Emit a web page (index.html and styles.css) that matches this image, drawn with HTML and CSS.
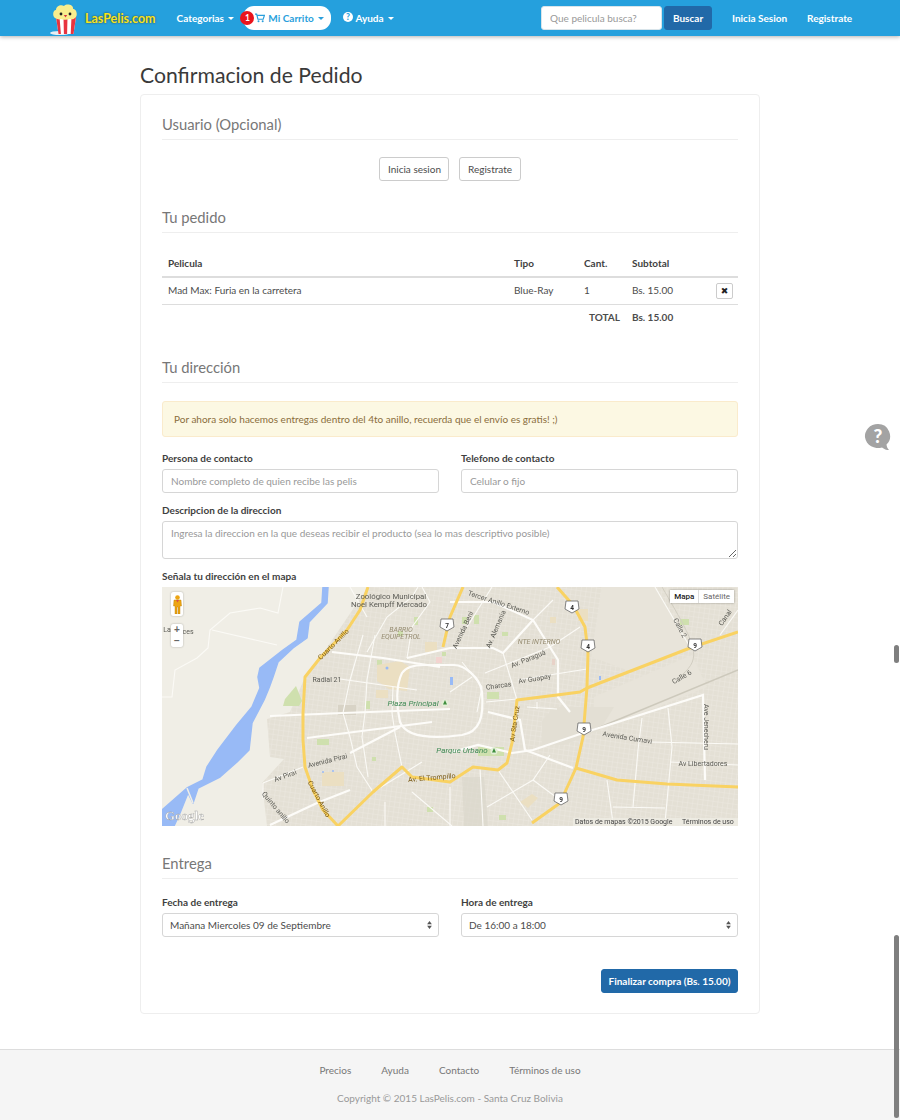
FILE: index.html
```html
<!DOCTYPE html>
<html lang="es">
<head>
    <meta charset="UTF-8">
    <meta name="viewport" content="width=device-width, initial-scale=1.0">
    <title>Confirmacion de Pedido - LasPelis.com</title>
    <link rel="stylesheet" href="styles.css">
</head>
<body>

<nav class="navbar">
    <a class="brand">
        <svg class="brand-logo" width="30" height="31" viewBox="0 0 30 31">
            <ellipse cx="10" cy="29" rx="10" ry="2" fill="#e8eef2"/>
            <path d="M6 13h20l-2.500 17h-15z" fill="#fff"/>
            <path d="M6 13h3.500l1.400 17H8.500zM13.500 13h4l-.4 17h-3.200zM21.500 13H26l-2.500 17h-2.800z" fill="#e8343f"/>
            <path d="M5 14c-3-2-2-8 1-8 0-4 5-6 8-4 3-3 10-1 9 3 4 0 5 7 2 9-2 2-4 1-5 1-3 1-7 1-9 0-2 1-4 0-6-1z" fill="#f9ee8e"/>
            <circle cx="11" cy="10" r="1.400" fill="#222"/>
            <circle cx="20" cy="10" r="1.400" fill="#222"/>
            <path d="M13.800 11h3.400l-1.700 2.600z" fill="#d9343f"/>
        </svg>
        <span class="brand-name">LasPelis.com</span>
    </a>
    <a class="nav-link nav-categorias">Categorias <i class="caret"></i></a>
    <div class="cart-pill">
        <span class="cart-badge">1</span>
        <svg class="cart-icon" width="10" height="10" viewBox="0 0 12 11">
            <path d="M0 .8h2l1.500 6.200h6.300L11.300 2.300H2.700" fill="none" stroke="#2a9fdc" stroke-width="1.400"/>
            <circle cx="4.200" cy="9.500" r="1.200" fill="#2a9fdc"/>
            <circle cx="9.200" cy="9.500" r="1.200" fill="#2a9fdc"/>
        </svg>
        Mi Carrito <i class="caret"></i>
    </div>
    <a class="nav-link nav-ayuda">
        <svg width="10" height="10" viewBox="0 0 10 10">
            <circle cx="5" cy="5" r="5" fill="#fff"/>
            <text x="5" y="8" class="q-mark">?</text>
        </svg>
        Ayuda <i class="caret"></i>
    </a>
    <form class="nav-search">
        <input type="text" placeholder="Que pelicula busca?">
        <button type="button" class="btn-buscar">Buscar</button>
    </form>
    <a class="nav-link nav-login">Inicia Sesion</a>
    <a class="nav-link nav-register">Registrate</a>
</nav>

<main class="container">
    <h1>Confirmacion de Pedido</h1>

    <div class="panel">
        <h2 class="first">Usuario (Opcional)</h2>
        <div class="user-buttons">
            <button type="button" class="btn">Inicia sesion</button>
            <button type="button" class="btn">Registrate</button>
        </div>

        <h2>Tu pedido</h2>
        <table class="order">
            <thead>
                <tr>
                    <th class="col-name">Pelicula</th>
                    <th class="col-type">Tipo</th>
                    <th class="col-qty">Cant.</th>
                    <th class="col-sub">Subtotal</th>
                    <th class="col-del"></th>
                </tr>
            </thead>
            <tbody>
                <tr>
                    <td>Mad Max: Furia en la carretera</td>
                    <td>Blue-Ray</td>
                    <td>1</td>
                    <td>Bs. 15.00</td>
                    <td class="cell-del"><button type="button" class="btn-del">&#10006;</button></td>
                </tr>
                <tr class="total-row">
                    <td colspan="3">TOTAL</td>
                    <td>Bs. 15.00</td>
                    <td></td>
                </tr>
            </tbody>
        </table>

        <h2 class="address-title">Tu dirección</h2>
        <div class="alert">Por ahora solo hacemos entregas dentro del 4to anillo, recuerda que el envío es gratis! ;)</div>

        <div class="form-row">
            <label>
                <span>Persona de contacto</span>
                <input type="text" placeholder="Nombre completo de quien recibe las pelis">
            </label>
            <label>
                <span>Telefono de contacto</span>
                <input type="text" placeholder="Celular o fijo">
            </label>
        </div>
        <label class="form-block">
            <span>Descripcion de la direccion</span>
            <textarea placeholder="Ingresa la direccion en la que deseas recibir el producto (sea lo mas descriptivo posible)"></textarea>
        </label>
        <div class="map-label">Señala tu dirección en el mapa</div>

        <div class="map">
            <svg width="576" height="239" viewBox="0 0 576 239">
                <defs>
                    <pattern id="streets" width="5" height="5" patternUnits="userSpaceOnUse" patternTransform="rotate(8)">
                        <path d="M0 0H5M0 0V5" stroke="#efece5" stroke-width="1" fill="none"/>
                    </pattern>
                </defs>
                <rect width="576" height="239" fill="#f0eee6"/>
                <path d="M206 0L158 71 143 90 128 125 105 132 108 170 122 172 100 196 105 239H576V0z" fill="#e4e0d5"/>
                <path d="M206 0L158 71 143 90 128 125 105 132 108 170 122 172 100 196 105 239H576V0z" fill="url(#streets)" opacity=".7"/>
                <path d="M440 0L493 0 528 60 470 85 430 70z" fill="#e8e4da"/>
                <path d="M432 110L530 68 545 100 431 146z" fill="#e8e4da"/>

                <!-- parks and blocks -->
                <g fill="#cfe0ae">
                    <path d="M123 112l11-13 6 15-3 5h-16z"/>
                    <rect x="155" y="152" width="12" height="6"/>
                    <rect x="204" y="114" width="4" height="8"/>
                    <rect x="215" y="73" width="5" height="5"/>
                    <rect x="252" y="30" width="4" height="8"/>
                    <rect x="312" y="28" width="5" height="9"/>
                    <rect x="325" y="105" width="12" height="7"/>
                    <rect x="316" y="160" width="26" height="9"/>
                    <rect x="337" y="228" width="7" height="5"/>
                    <rect x="518" y="32" width="9" height="6"/>
                    <rect x="236" y="44" width="5" height="5"/>
                    <rect x="280" y="65" width="4" height="4"/>
                    <rect x="210" y="170" width="4" height="4"/>
                    <rect x="265" y="220" width="6" height="5"/>
                    <rect x="300" y="30" width="5" height="7"/>
                    <rect x="340" y="45" width="6" height="4"/>
                </g>
                <g fill="#ebdfc2">
                    <path d="M215 78l23-4 10 6-3 24-18-2-12-8z"/>
                    <rect x="160" y="185" width="22" height="14"/>
                    <rect x="263" y="55" width="12" height="10"/>
                    <rect x="214" y="103" width="12" height="8"/>
                    <path d="M358 215l12-8 6 4-10 10z"/>
                    <rect x="416" y="22" width="10" height="12"/>
                    <rect x="388" y="30" width="6" height="6"/>
                </g>
                <rect x="176" y="118" width="18" height="10" fill="#d8d3c6"/>
                <path d="M452 120h-60l-12 14v24h22l36-15z" fill="#e3dfd4"/>
                <path d="M300 190l22 0 4 49h-24z" fill="#d9d5ca" opacity=".6"/>
                <rect x="274" y="70" width="6" height="6" fill="#f3d4d0"/>
                <rect x="390" y="72" width="3" height="6" fill="#e8d2c8"/>

                <!-- river -->
                <path class="river" d="M161 0L160 16 138 35 135 53 121 63 98 81 96 90 98 101 90 120 75 138 56 163 45 180 41 193 25 201 0 223V239H12L18 226 26 206 31 216 36 201 58 190 75 175 87 163 90 136 102 113 107 101 111 90 116 75 131 61 145 51 147 35 165 16 166 0z"/>
                <path d="M25 201L31 216" stroke="#f0eee6" stroke-width="1.500"/>
                <circle cx="225" cy="81" r="1.500" fill="#98baf6"/>
                <circle cx="161" cy="185" r="1" fill="#98baf6"/>
                <circle cx="171" cy="184" r="1" fill="#98baf6"/>
                <rect x="437" y="89" width="2" height="4" fill="#98baf6"/>
                <rect x="288" y="90" width="3" height="8" fill="#98baf6"/>

                <!-- railway -->
                <path d="M431 143L576 83" stroke="#cdc9bc" stroke-width="1.500" fill="none"/>
                <path d="M500 0C535 60 540 70 520 88" stroke="#d2cec2" stroke-width="1" fill="none"/>

                <!-- white roads -->
                <g class="road-thin">
                    <path d="M0 110H10L13 83 35 71 46 61 48 43 68 26 98 21 116 26 121 0"/>
                    <path d="M50 43L115 58"/>
                    <path d="M178 92L255 103"/>
                    <path d="M201 48L188 93 181 126 188 150 195 180 211 205"/>
                    <path d="M213 48L205 93 203 126 200 150 206 190"/>
                    <path d="M231 100L230 126 233 146 240 180"/>
                    <path d="M101 196L141 180M101 196V212"/>
                    <path d="M323 86L348 76 388 60 418 40"/>
                    <path d="M356 93L425 82"/>
                    <path d="M324 115L355 112"/>
                    <path d="M341 66L355 113"/>
                    <path d="M371 33L391 13"/>
                    <path d="M488 155L576 157"/>
                    <path d="M480 131L476 163 471 220"/>
                    <path d="M506 121L510 160 503 236"/>
                    <path d="M508 175L576 178"/>
                    <path d="M445 193L451 236M451 220L503 221"/>
                    <path d="M493 0L528 60"/>
                    <path d="M558 48L576 23"/>
                    <path d="M336 183L370 233"/>
                    <path d="M388 168L371 193 325 220"/>
                    <path d="M371 193L398 213"/>
                    <path d="M318 180L321 239"/>
                    <path d="M288 200V239"/>
                    <path d="M205 65L225 30 250 10 256 0"/>
                    <path d="M305 40L330 0"/>
                    <path d="M310 90L288 105"/>
                    <path d="M211 205L260 175"/>
                    <path d="M223 215V239M250 205L290 239"/>
                    <path d="M188 0L205 30"/>
                    <path d="M365 120L395 122M375 115V122"/>
                    <path d="M260 0L268 15 250 40 245 71"/>
                    <path d="M300 75L320 100 315 125"/>
                </g>
                <g class="road-wide">
                    <path d="M108 129L181 126 288 122"/>
                    <path d="M170 65L221 71 278 80"/>
                    <path d="M245 71L288 61H331L341 66 371 33"/>
                    <path d="M145 151L231 140 270 135"/>
                    <path d="M240 86C244 80 252 78 262 78H292C302 78 318 90 320 105 322 130 318 145 300 148 270 152 244 150 238 135 234 118 234 98 240 86z"/>
                    <path d="M326 125L358 133 363 163 411 181"/>
                    <path d="M350 166L371 163 421 146 541 108 543 193"/>
                    <path d="M108 238L155 216 188 203"/>
                    <path d="M188 166L238 140"/>
                    <path d="M290 165L316 158 350 166"/>
                    <path d="M288 15H331L371 33 396 73 396 110 408 125"/>
                </g>

                <!-- yellow roads -->
                <g class="road-yellow">
                    <path d="M206 0L198 23 185 43 158 71 143 90 141 126 141 153 143 180 151 203 161 223 176 239"/>
                    <path d="M176 239L211 205 240 180 250 190 288 195 311 180 336 183 345 176 350 156 355 113 395 108 418 105 425 101 528 61 576 45"/>
                    <path d="M395 0L411 18 423 40 426 66 425 100 421 150 414 181 398 216 370 236"/>
                    <path d="M414 181L455 193 505 197 576 200"/>
                    <path d="M301 0L288 30 281 60"/>
                </g>

                <!-- highway shields -->
                <g class="shield"><path d="M404 14h12l1 8-7 4-7-4z"/><text x="410" y="23">4</text></g>
                <g class="shield"><path d="M420 53h12l1 8-7 4-7-4z"/><text x="426" y="62">4</text></g>
                <g class="shield"><path d="M416 136h12l1 8-7 4-7-4z"/><text x="422" y="145">9</text></g>
                <g class="shield"><path d="M527 52h12l1 8-7 4-7-4z"/><text x="533" y="61">9</text></g>
                <g class="shield"><path d="M393 206h12l1 8-7 4-7-4z"/><text x="399" y="215">9</text></g>
                <g class="shield"><path d="M279 32h12l1 8-7 4-7-4z"/><text x="285" y="41">7</text></g>

                <!-- labels -->
                <g class="map-text">
                    <text class="poi" x="229" y="12">Zoológico Municipal</text>
                    <text class="poi" x="227" y="20">Noel Kempff Mercado</text>
                    <text x="165" y="95">Radial 21</text>
                    <text transform="translate(336 18) rotate(18)">Tercer Anillo Externo</text>
                    <text transform="translate(303 44) rotate(-65)">Avenida Beni</text>
                    <text transform="translate(336 43) rotate(-67)">Av. Alemania</text>
                    <text transform="translate(367 74) rotate(-22)">Av. Paraguá</text>
                    <text transform="translate(337 101) rotate(-8)">Charcas</text>
                    <text transform="translate(373 94) rotate(-10)">Av Guapay</text>
                    <text transform="translate(465 153) rotate(9)">Avenida Cumavi</text>
                    <text transform="translate(542 140) rotate(90)">Ave Jenecheru</text>
                    <text x="541" y="179">Av Libertadores</text>
                    <text transform="translate(521 92) rotate(-30)">Calle 6</text>
                    <text transform="translate(516 42) rotate(62)">Calle 2</text>
                    <text transform="translate(565 32) rotate(-55)">Canal</text>
                    <text transform="translate(166 176) rotate(-14)">Avenida Pirai</text>
                    <text transform="translate(124 191) rotate(-20)">Av Pirai</text>
                    <text transform="translate(112 222) rotate(50)">Quinto anillo</text>
                    <text x="5" y="45">La</text>
                    <text x="26" y="47">ces</text>
                </g>
                <g class="map-text road-text">
                    <text transform="translate(173 59) rotate(-45)">Cuarto Anillo</text>
                    <text transform="translate(155 213) rotate(62)">Cuarto Anillo</text>
                    <text transform="translate(270 193) rotate(-5)">Av. El Trompillo</text>
                    <text transform="translate(355 137) rotate(-82)">Av Sta Cruz</text>
                </g>
                <g class="map-text district">
                    <text x="239" y="45">BARRIO</text>
                    <text x="239" y="52">EQUIPETROL</text>
                    <text x="377" y="57">NTE INTERNO</text>
                </g>
                <g class="map-text park">
                    <text x="251" y="119">Plaza Principal</text>
                    <text x="300" y="166">Parque Urbano</text>
                </g>
                <circle cx="283" cy="116" r="3.500" fill="#e4efd8"/>
                <circle cx="332" cy="164" r="3.500" fill="#e4efd8"/>
                <path d="M283 113l2 4.500h-4zM332 161l2 4.500h-4z" fill="#3f8f3f"/>

                <text x="3" y="233" class="google-mark">Google</text>
                <rect x="411" y="231" width="165" height="8" fill="#f0eee6" opacity=".7"/>
                <text x="413" y="237" class="map-terms">Datos de mapas ©2015 Google</text>
                <text x="520" y="237" class="map-terms">Términos de uso</text>
            </svg>

            <div class="pegman">
                <svg width="9" height="19" viewBox="0 0 9 19">
                    <circle cx="4.500" cy="2.500" r="2.300" fill="#eda512"/>
                    <path d="M1 5h7l.5 6H7v8H5V12H4v7H2v-8H.500z" fill="#eda512" stroke="#b97b08" stroke-width=".4"/>
                    <path d="M3 5h3L4.500 7.500z" fill="#d9504a"/>
                </svg>
            </div>
            <div class="zoom-ctrl"><span>+</span><span>−</span></div>
            <div class="map-type"><b>Mapa</b><span>Satélite</span></div>
        </div>

        <h2 class="delivery-title">Entrega</h2>
        <div class="form-row delivery-row">
            <label>
                <span>Fecha de entrega</span>
                <div class="select">Mañana Miercoles 09 de Septiembre<svg width="5" height="8" viewBox="0 0 6 10"><path d="M3 0l3 4H0zM3 10L0 6h6z" fill="#555"/></svg></div>
            </label>
            <label>
                <span>Hora de entrega</span>
                <div class="select">De 16:00 a 18:00<svg width="5" height="8" viewBox="0 0 6 10"><path d="M3 0l3 4H0zM3 10L0 6h6z" fill="#555"/></svg></div>
            </label>
        </div>
        <div class="finish">
            <button type="button" class="btn-primary">Finalizar compra (Bs. 15.00)</button>
        </div>
    </div>
</main>

<footer class="footer">
    <div class="footer-links">
        <a>Precios</a>
        <a>Ayuda</a>
        <a>Contacto</a>
        <a>Términos de uso</a>
    </div>
    <p>Copyright © 2015 LasPelis.com - Santa Cruz Bolivia</p>
</footer>

<svg class="help-bubble" width="28" height="28" viewBox="0 0 28 28">
    <path d="M14 1a13 12 0 1 0 4 23.400c2 1.600 4.500 2.600 7 2.600-1.500-1.500-2.300-3.500-2.500-5.500A12 12 0 0 0 14 1z" fill="#a3a3a3"/>
    <text x="14" y="20" class="help-mark">?</text>
</svg>
<div class="scroll-thumb thumb-a"></div>
<div class="scroll-thumb thumb-b"></div>

</body>
</html>
```

FILE: styles.css
```css
* {
    box-sizing: border-box;
}

html,
body {
    height: 1120px;
    overflow: hidden;
}

body {
    margin: 0;
    position: relative;
    font-family: Lato, "Open Sans", sans-serif;
    font-size: 10px;
    color: #4c4c4c;
    background: #fff;
}

/* navbar */
.navbar {
    display: flex;
    align-items: center;
    height: 36px;
    padding-left: 50px;
    background: #25a0dd;
    box-shadow: 0 1px 4px rgba(0, 0, 0, .3);
}

.brand {
    display: flex;
    align-items: center;
}

.brand-logo {
    margin-top: 2px;
}

.brand-name {
    margin-left: 5px;
    font-size: 12.5px;
    font-weight: 700;
    color: #f5e620;
    text-shadow: 0 0 2px #333;
}

.nav-link {
    margin-top: -1px;
    font-weight: 700;
    color: #fff;
    white-space: nowrap;
}

.caret {
    display: inline-block;
    margin-left: 2px;
    vertical-align: middle;
    border-top: 3px solid currentColor;
    border-left: 3px solid transparent;
    border-right: 3px solid transparent;
}

.nav-categorias {
    margin-left: 21px;
}

.cart-pill {
    position: relative;
    display: flex;
    align-items: center;
    gap: 3px;
    width: 88px;
    height: 24px;
    margin-left: 9px;
    padding-left: 12px;
    border-radius: 11px;
    background: #fff;
    font-weight: 700;
    color: #2a9fdc;
}

.cart-pill .caret {
    margin-left: 1px;
}

.cart-badge {
    position: absolute;
    left: -3px;
    top: 5px;
    width: 14px;
    height: 14px;
    border-radius: 50%;
    background: #e9141c;
    color: #fff;
    font-size: 8.500px;
    line-height: 14px;
    text-align: center;
}

.nav-ayuda {
    margin-left: 12px;
}

.q-mark {
    font-size: 8.500px;
    font-weight: 900;
    fill: #25a0dd;
    text-anchor: middle;
}

.nav-search {
    display: flex;
    gap: 2px;
    margin-left: 147px;
}

.nav-search input {
    width: 121px;
    height: 24px;
    padding: 0 8px;
    border: 1px solid #d8e4ea;
    border-radius: 3px;
    font: 10px Lato, sans-serif;
}

.nav-search input::placeholder {
    color: #999;
}

.btn-buscar {
    width: 48px;
    height: 24px;
    padding: 0;
    border: 1px solid #2169a8;
    border-radius: 3px;
    background: #2169a8;
    color: #fff;
    font: 700 10px Lato, sans-serif;
}

.nav-login {
    margin-left: 20px;
}

.nav-register {
    margin-left: 20px;
}

/* page */
.container {
    width: 620px;
    margin: 0 auto;
}

h1 {
    margin: 25px 0 0;
    height: 33px;
    font-size: 21.200px;
    font-weight: 400;
    line-height: 28px;
    color: #3a3a3a;
}

.panel {
    height: 920px;
    padding: 19px 21px 0;
    border: 1px solid #eeeeee;
    border-radius: 4px;
}

h2 {
    height: 26px;
    margin: 0;
    border-bottom: 1px solid #eeeeee;
    font-size: 14.800px;
    font-weight: 400;
    line-height: 20px;
    color: #777;
}

.user-buttons {
    display: flex;
    justify-content: center;
    gap: 10px;
    margin: 17px 0 26px;
}

.btn {
    height: 24px;
    padding: 0 7.500px;
    border: 1px solid #cccccc;
    border-radius: 3px;
    background: #fff;
    color: #4c4c4c;
    font: 10px Lato, sans-serif;
}

/* order table */
.order {
    width: 576px;
    margin-top: 16px;
    border-collapse: collapse;
    table-layout: fixed;
}

.order th {
    height: 28px;
    padding: 0 6px;
    border-bottom: 2px solid #dddddd;
    text-align: left;
    font-weight: 700;
    color: #3f3f3f;
}

.order td {
    height: 27px;
    padding: 0 6px 2px;
    border-bottom: 1px solid #dddddd;
}

.order .cell-del {
    padding-bottom: 0;
}

.col-name {
    width: 346px;
}

.col-type {
    width: 70px;
}

.col-qty {
    width: 48px;
}

.col-sub {
    width: 84px;
}

.order .total-row td {
    border-bottom: 0;
    font-weight: 700;
}

.total-row td:first-child {
    text-align: right;
    padding-right: 6px;
}

.btn-del {
    display: block;
    width: 17px;
    height: 16px;
    padding: 0;
    border: 1px solid #ccc;
    border-radius: 2px;
    background: #fff;
    color: #222;
    font-family: "DejaVu Sans", sans-serif;
    font-size: 9px;
    line-height: 14px;
}

.address-title {
    margin-top: 26px;
}

.alert {
    height: 36px;
    margin-top: 18px;
    padding: 0 11px;
    border: 1px solid #faebcc;
    border-radius: 3px;
    background: #fcf8e3;
    color: #8a6d3b;
    line-height: 34px;
}

/* form */
.form-row {
    display: grid;
    grid-template-columns: 277px 277px;
    gap: 22px;
    margin-top: 14px;
}

.delivery-row {
    margin-top: 16px;
}

label {
    display: block;
}

label span,
.map-label {
    display: block;
    height: 14px;
    font-weight: 700;
    line-height: 14px;
    color: #3f3f3f;
}

label span {
    margin-bottom: 4px;
}

input,
textarea {
    display: block;
    color: #4c4c4c;
}

label input,
textarea {
    width: 100%;
    height: 24px;
    padding: 0 8px;
    border: 1px solid #d6d6d6;
    border-radius: 3px;
    font: 10px Lato, sans-serif;
}

textarea {
    height: 38px;
    padding-top: 5px;
}

input::placeholder,
textarea::placeholder {
    color: #999;
}

.form-block {
    margin-top: 10px;
}

.map-label {
    margin-top: 10px;
    margin-bottom: 4px;
}

/* map */
.map {
    position: relative;
    width: 576px;
    height: 239px;
    overflow: hidden;
}

.map > svg {
    display: block;
    filter: blur(.35px);
}

.river {
    fill: #98baf6;
    stroke: #98baf6;
    stroke-width: 1.500;
    stroke-linejoin: round;
}

.road-thin path {
    fill: none;
    stroke: #fbfaf6;
    stroke-width: 1.100;
}

.road-wide path {
    fill: none;
    stroke: #fdfcf9;
    stroke-width: 2.200;
}

.road-yellow path {
    fill: none;
    stroke: #f9d262;
    stroke-width: 3;
    stroke-linejoin: round;
}

.shield path {
    fill: #fff;
    stroke: #666;
    stroke-width: .8;
}

.shield text {
    font: 700 6.500px Roboto, sans-serif;
    fill: #333;
    text-anchor: middle;
}

.map-text text {
    font: 7px Roboto, sans-serif;
    fill: #5b5b55;
    text-anchor: middle;
}

.map-text .poi {
    font-size: 7.800px;
}

.road-text text {
    fill: #7a5a14;
}

.district text {
    fill: #958b70;
    font-style: italic;
    font-size: 7px;
}

.park text {
    fill: #3f8a55;
    font-style: italic;
    font-size: 8px;
}

.google-mark {
    font: 700 13px "Liberation Serif", serif;
    fill: #fff;
    stroke: #9a9a9a;
    stroke-width: .4;
    opacity: .9;
}

.map-terms {
    font: 7px Roboto, sans-serif;
    fill: #444;
}

.pegman {
    position: absolute;
    left: 9px;
    top: 5px;
    display: flex;
    justify-content: center;
    align-items: center;
    width: 12px;
    height: 24px;
    border-radius: 2px;
    background: #fff;
    box-shadow: 0 0 2px rgba(0, 0, 0, .3);
}

.zoom-ctrl {
    position: absolute;
    left: 9px;
    top: 37px;
    display: flex;
    flex-direction: column;
    width: 12px;
    height: 23px;
    border-radius: 2px;
    background: #fff;
    box-shadow: 0 0 2px rgba(0, 0, 0, .3);
    font: 700 10px/11px "Liberation Sans", sans-serif;
    color: #666;
    text-align: center;
}

.map-type {
    position: absolute;
    right: 4px;
    top: 3px;
    display: flex;
    height: 13px;
    background: #fff;
    box-shadow: 0 0 2px rgba(0, 0, 0, .35);
    font: 8px/13px Roboto, sans-serif;
    color: #666;
}

.map-type b {
    padding: 0 4px;
    border-right: 1px solid #ddd;
    color: #222;
    font-weight: 500;
}

.map-type span {
    padding: 0 4px;
}

.delivery-title {
    margin-top: 27px;
}

.select {
    display: flex;
    justify-content: space-between;
    align-items: center;
    height: 24px;
    padding: 0 6px 0 7px;
    border: 1px solid #d6d6d6;
    border-radius: 3px;
    background: #fff;
    color: #4c4c4c;
}

.finish {
    display: flex;
    justify-content: flex-end;
    margin-top: 32px;
}

.btn-primary {
    width: 137px;
    height: 24px;
    padding: 0;
    border: 1px solid #2169a8;
    border-radius: 3px;
    background: #2169a8;
    color: #fff;
    font: 700 10px Lato, sans-serif;
}

/* footer */
.footer {
    height: 71px;
    margin-top: 35px;
    padding-top: 13px;
    border-top: 1px solid #dddddd;
    background: #f5f5f5;
    text-align: center;
    color: #777;
}

.footer-links {
    display: flex;
    justify-content: center;
    gap: 30px;
    line-height: 14px;
}

.footer p {
    margin: 14px 0 0;
    line-height: 14px;
    color: #999;
}

/* things floating over the page */
.help-bubble {
    position: absolute;
    left: 864px;
    top: 423px;
}

.help-mark {
    font: 900 19px Lato, sans-serif;
    fill: #fff;
    text-anchor: middle;
}

.scroll-thumb {
    position: absolute;
    left: 894px;
    width: 5px;
    border-radius: 3px;
    background: #7f7f7f;
}

.thumb-a {
    top: 645px;
    height: 18px;
}

.thumb-b {
    top: 935px;
    height: 183px;
}
```
